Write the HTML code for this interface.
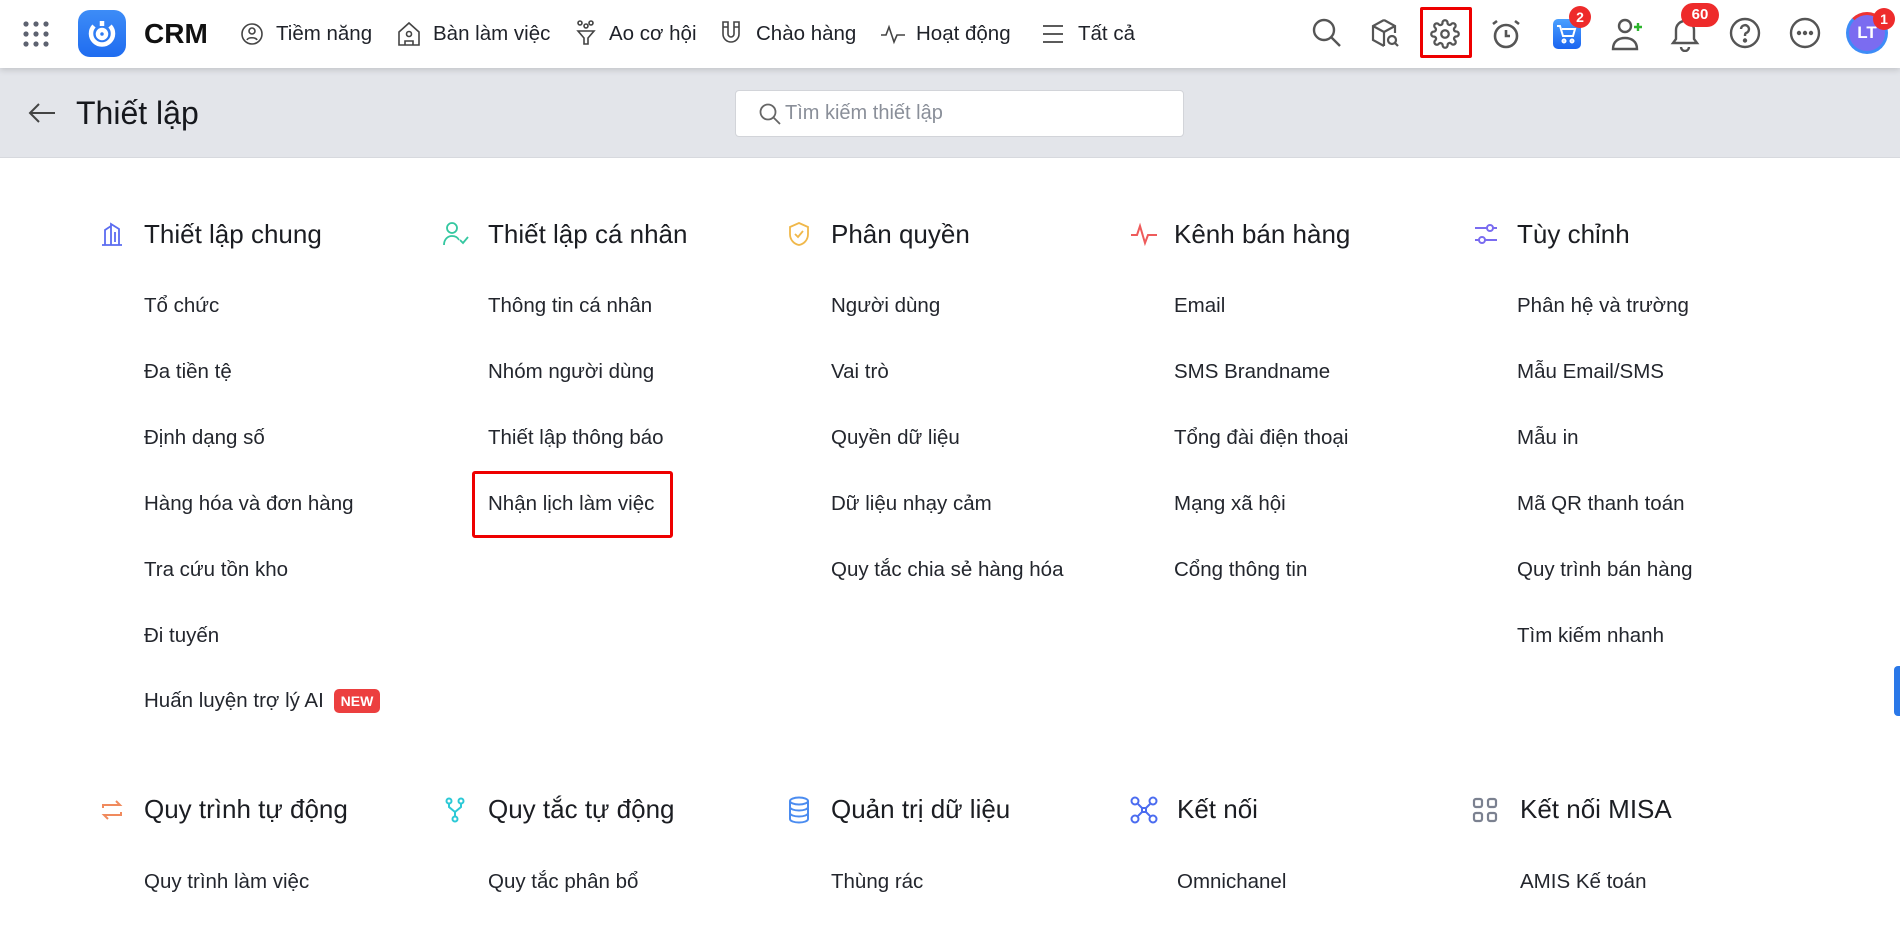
<!DOCTYPE html>
<html><head><meta charset="utf-8">
<style>
*{margin:0;padding:0;box-sizing:border-box}
body{width:1900px;height:931px;overflow:hidden;background:#fff;font-family:"Liberation Sans",Arial,sans-serif;color:#1f2229;position:relative}
.a{position:absolute}
.top{left:0;top:0;width:1900px;height:68px;background:#fff;box-shadow:0 2px 6px rgba(0,0,0,.15);z-index:2}
.nav{top:0;height:68px;line-height:68px;font-size:20.5px;color:#1f2229;white-space:nowrap}
.hdr{left:0;top:68px;width:1900px;height:90px;background:#e3e5ea;border-bottom:1px solid #d7d9de}
.sec{font-size:26px;color:#1b1d22;white-space:nowrap;line-height:32px}
.it{font-size:20.5px;color:#23262d;white-space:nowrap;line-height:28px}
svg{position:absolute}
</style></head><body>
<div class="a top">
 <svg style="left:22px;top:20px" width="28" height="28" viewBox="0 0 28 28" fill="#5d6270"><circle cx="4" cy="4" r="2.6"/><circle cx="14" cy="4" r="2.6"/><circle cx="24" cy="4" r="2.6"/><circle cx="4" cy="14" r="2.6"/><circle cx="14" cy="14" r="2.6"/><circle cx="24" cy="14" r="2.6"/><circle cx="4" cy="24" r="2.6"/><circle cx="14" cy="24" r="2.6"/><circle cx="24" cy="24" r="2.6"/></svg>
 <div class="a" style="left:78px;top:10px;width:48px;height:47px;border-radius:12px;background:linear-gradient(#3d8cf7,#1f6cf0)"></div>
 <svg style="left:87px;top:18px" width="30" height="30" viewBox="0 0 30 30" fill="none" stroke="#fff" stroke-width="4.5"><path d="M7 8a11 11 0 1 0 16 0"/><circle cx="15" cy="16" r="4"/><path d="M15 3v5"/></svg>
 <div class="a" style="left:144px;top:0;line-height:68px;font-size:28px;font-weight:bold;color:#111">CRM</div>
 <svg style="left:240px;top:22px" width="24" height="24" viewBox="0 0 24 24" fill="none" stroke="#444" stroke-width="1.6"><circle cx="12" cy="12" r="10"/><circle cx="12" cy="9" r="3"/><path d="M7 18c1-3 9-3 10 0"/></svg>
 <div class="a nav" style="left:276px">Tiềm năng</div>
 <svg style="left:397px;top:21px" width="24" height="26" viewBox="0 0 24 26" fill="none" stroke="#444" stroke-width="1.6"><path d="M2 11L12 2l10 9v13H2z"/><circle cx="12" cy="13" r="2.5"/><path d="M8 24v-4h8v4"/></svg>
 <div class="a nav" style="left:433px">Bàn làm việc</div>
 <svg style="left:575px;top:20px" width="22" height="26" viewBox="0 0 22 26" fill="none" stroke="#444" stroke-width="1.6"><circle cx="5" cy="3" r="2"/><circle cx="16" cy="3" r="2"/><circle cx="11" cy="6" r="2"/><path d="M3 11h16l-6 7v6h-4v-6z"/></svg>
 <div class="a nav" style="left:609px">Ao cơ hội</div>
 <svg style="left:720px;top:20px" width="22" height="26" viewBox="0 0 22 26" fill="none" stroke="#444" stroke-width="1.6"><path d="M3 2v12a8 8 0 0 0 16 0V2h-5v12a3 3 0 0 1-6 0V2z"/><path d="M3 7h5M14 7h5"/></svg>
 <div class="a nav" style="left:756px">Chào hàng</div>
 <svg style="left:880px;top:22px" width="26" height="24" viewBox="0 0 26 24" fill="none" stroke="#444" stroke-width="1.6"><path d="M1 13h5l3-8 5 15 3-7h8"/></svg>
 <div class="a nav" style="left:916px">Hoạt động</div>
 <svg style="left:1042px;top:24px" width="22" height="20" viewBox="0 0 22 20" stroke="#444" stroke-width="1.8"><path d="M1 2h20M1 10h20M1 18h20"/></svg>
 <div class="a nav" style="left:1078px">Tất cả</div>
 <svg style="left:1311px;top:17px" width="32" height="32" viewBox="0 0 32 32" fill="none" stroke="#555" stroke-width="2.4"><circle cx="13" cy="13" r="10"/><path d="M20.5 20.5L29 29"/></svg>
 <svg style="left:1370px;top:18px" width="32" height="32" viewBox="0 0 32 32" fill="none" stroke="#555" stroke-width="2.2"><path d="M14 2l11 6v7M14 2L3 8v14l11 6M3 8l11 6 11-6M14 14v14"/><circle cx="22" cy="22" r="4"/><path d="M25 25l3 3"/></svg>
 <div class="a" style="left:1420px;top:7px;width:52px;height:51px;border:3px solid #ee0000;border-radius:2px"></div>
 <svg style="left:1430px;top:19px" width="30" height="30" viewBox="0 0 24 24" fill="none" stroke="#555" stroke-width="1.8"><circle cx="12" cy="12" r="3"/><path d="M19.4 15a1.7 1.7 0 0 0 .3 1.8l.1.1a2 2 0 1 1-2.8 2.8l-.1-.1a1.7 1.7 0 0 0-1.8-.3 1.7 1.7 0 0 0-1 1.5V21a2 2 0 1 1-4 0v-.1a1.7 1.7 0 0 0-1.100-1.5 1.7 1.7 0 0 0-1.8.3l-.1.1a2 2 0 1 1-2.8-2.8l.1-.1a1.7 1.7 0 0 0 .3-1.8 1.7 1.7 0 0 0-1.5-1H3a2 2 0 1 1 0-4h.1a1.7 1.7 0 0 0 1.5-1.1 1.7 1.7 0 0 0-.3-1.8l-.1-.1a2 2 0 1 1 2.8-2.8l.1.1a1.7 1.7 0 0 0 1.8.3H9a1.7 1.7 0 0 0 1-1.5V3a2 2 0 1 1 4 0v.1a1.7 1.7 0 0 0 1 1.5 1.7 1.7 0 0 0 1.8-.3l.1-.1a2 2 0 1 1 2.8 2.8l-.1.1a1.7 1.7 0 0 0-.3 1.8V9a1.7 1.7 0 0 0 1.5 1H21a2 2 0 1 1 0 4h-.1a1.7 1.7 0 0 0-1.5 1z"/></svg>
 <svg style="left:1490px;top:18px" width="32" height="32" viewBox="0 0 32 32" fill="none" stroke="#555" stroke-width="2.6"><circle cx="16" cy="18" r="11"/><path d="M16 12v6h4M3 6l4-3M29 6l-4-3"/></svg>
 <div class="a" style="left:1553px;top:19px;width:28px;height:30px;border-radius:5px;background:linear-gradient(#4aa0ff,#1a64f0)"></div>
 <svg style="left:1556px;top:23px" width="22" height="22" viewBox="0 0 22 22" fill="none" stroke="#fff" stroke-width="2"><path d="M1 3h3l3 10h10l2-7H6"/><circle cx="8" cy="18" r="1.5"/><circle cx="16" cy="18" r="1.5"/></svg>
 <div class="a" style="left:1569px;top:6px;width:22px;height:22px;border-radius:50%;background:#ee2b2b;color:#fff;font-size:14px;font-weight:bold;text-align:center;line-height:22px">2</div>
 <svg style="left:1610px;top:16px" width="36" height="36" viewBox="0 0 36 36" fill="none" stroke="#555" stroke-width="2.4"><circle cx="15" cy="10" r="6"/><path d="M3 33c0-8 6-11 12-11s12 3 12 11z"/><path d="M28 7v8M24 11h8" stroke="#2cb52c"/></svg>
 <svg style="left:1670px;top:18px" width="30" height="34" viewBox="0 0 30 34" fill="none" stroke="#555" stroke-width="2.4"><path d="M15 3a9 9 0 0 0-9 9v9l-3 4h24l-3-4v-9a9 9 0 0 0-9-9zM11 29a4 4 0 0 0 8 0"/></svg>
 <div class="a" style="left:1681px;top:3px;width:38px;height:24px;border-radius:12px;background:#ee2b2b;color:#fff;font-size:15px;font-weight:bold;text-align:center;line-height:24px">60</div>
 <svg style="left:1729px;top:17px" width="32" height="32" viewBox="0 0 32 32" fill="none" stroke="#555" stroke-width="2.4"><circle cx="16" cy="16" r="14"/><path d="M12 12a4 4 0 1 1 5 4c-1 .5-1 1.5-1 3"/><circle cx="16" cy="23.5" r="1" fill="#555"/></svg>
 <svg style="left:1789px;top:17px" width="32" height="32" viewBox="0 0 32 32" fill="none" stroke="#555" stroke-width="2.4"><circle cx="16" cy="16" r="14"/><circle cx="10" cy="16" r="1" fill="#555"/><circle cx="16" cy="16" r="1" fill="#555"/><circle cx="22" cy="16" r="1" fill="#555"/></svg>
 <div class="a" style="left:1846px;top:12px;width:42px;height:42px;border-radius:50%;border:3px solid #3d8cf7;border-top-color:#e33;background:#7b6cf0;color:#fff;font-weight:bold;font-size:17px;text-align:center;line-height:36px">LT</div>
 <div class="a" style="left:1873px;top:8px;width:22px;height:22px;border-radius:50%;background:#ee2b2b;color:#fff;font-size:14px;font-weight:bold;text-align:center;line-height:22px">1</div>
</div>
<div class="a hdr">
 <svg style="left:28px;top:34px" width="28" height="22" viewBox="0 0 28 22" fill="none" stroke="#444" stroke-width="2"><path d="M27 11H2M11 2L2 11l9 9"/></svg>
 <div class="a" style="left:76px;top:26px;font-size:32px;line-height:38px;color:#16181d">Thiết lập</div>
 <div class="a" style="left:735px;top:22px;width:449px;height:47px;background:#fff;border:1px solid #d2d4d9;border-radius:4px"></div>
 <svg style="left:758px;top:34px" width="24" height="24" viewBox="0 0 24 24" fill="none" stroke="#666" stroke-width="1.8"><circle cx="10" cy="10" r="7.5"/><path d="M15.5 15.5L22 22"/></svg>
 <div class="a" style="left:785px;top:33px;font-size:20px;line-height:24px;color:#8a8f99">Tìm kiếm thiết lập</div>
</div>

<svg style="left:100px;top:222px" width="24" height="24" viewBox="0 0 24 24" fill="none" stroke="#5b6cf0" stroke-width="1.8"><path d="M2 23h20M5 23V8l6-4v19M11 23V2l8 5v16M15 10v10"/></svg>
<div class="a sec" style="left:144px;top:218px">Thiết lập chung</div>
<svg style="left:443px;top:221px" width="26" height="26" viewBox="0 0 26 26" fill="none" stroke="#34c7a0" stroke-width="1.8"><circle cx="9" cy="7" r="5"/><path d="M1 24c0-6 4-9 8-9s6 2 7 4M17 19l3 3 5-6"/></svg>
<div class="a sec" style="left:488px;top:218px">Thiết lập cá nhân</div>
<svg style="left:787px;top:221px" width="24" height="26" viewBox="0 0 24 26" fill="none" stroke="#f0b84a" stroke-width="1.8"><path d="M12 2l9 4v7c0 6-4 10-9 11-5-1-9-5-9-11V6z"/><path d="M8 13l3 3 5-6"/></svg>
<div class="a sec" style="left:831px;top:218px">Phân quyền</div>
<svg style="left:1130px;top:222px" width="28" height="24" viewBox="0 0 28 24" fill="none" stroke="#ee5b5b" stroke-width="2"><path d="M1 13h6l3-9 5 17 3-8h9"/></svg>
<div class="a sec" style="left:1174px;top:218px">Kênh bán hàng</div>
<svg style="left:1473px;top:221px" width="26" height="26" viewBox="0 0 26 26" fill="none" stroke="#7a6cf0" stroke-width="2"><path d="M2 7h12M20 7h4M2 19h4M12 19h12"/><circle cx="17" cy="7" r="3"/><circle cx="9" cy="19" r="3"/></svg>
<div class="a sec" style="left:1517px;top:218px">Tùy chỉnh</div>

<div class="a it" style="left:144px;top:292px">Tổ chức</div>
<div class="a it" style="left:144px;top:358px">Đa tiền tệ</div>
<div class="a it" style="left:144px;top:424px">Định dạng số</div>
<div class="a it" style="left:144px;top:490px">Hàng hóa và đơn hàng</div>
<div class="a it" style="left:144px;top:556px">Tra cứu tồn kho</div>
<div class="a it" style="left:144px;top:622px">Đi tuyến</div>
<div class="a it" style="left:144px;top:687px">Huấn luyện trợ lý AI</div>
<div class="a" style="left:334px;top:689px;width:46px;height:24px;border-radius:5px;background:#ec3f3f;color:#fff;font-size:14px;font-weight:bold;text-align:center;line-height:24px">NEW</div>

<div class="a it" style="left:488px;top:292px">Thông tin cá nhân</div>
<div class="a it" style="left:488px;top:358px">Nhóm người dùng</div>
<div class="a it" style="left:488px;top:424px">Thiết lập thông báo</div>
<div class="a it" style="left:488px;top:490px">Nhận lịch làm việc</div>
<div class="a" style="left:472px;top:471px;width:201px;height:67px;border:3px solid #ee0000;border-radius:3px"></div>

<div class="a it" style="left:831px;top:292px">Người dùng</div>
<div class="a it" style="left:831px;top:358px">Vai trò</div>
<div class="a it" style="left:831px;top:424px">Quyền dữ liệu</div>
<div class="a it" style="left:831px;top:490px">Dữ liệu nhạy cảm</div>
<div class="a it" style="left:831px;top:556px">Quy tắc chia sẻ hàng hóa</div>

<div class="a it" style="left:1174px;top:292px">Email</div>
<div class="a it" style="left:1174px;top:358px">SMS Brandname</div>
<div class="a it" style="left:1174px;top:424px">Tổng đài điện thoại</div>
<div class="a it" style="left:1174px;top:490px">Mạng xã hội</div>
<div class="a it" style="left:1174px;top:556px">Cổng thông tin</div>

<div class="a it" style="left:1517px;top:292px">Phân hệ và trường</div>
<div class="a it" style="left:1517px;top:358px">Mẫu Email/SMS</div>
<div class="a it" style="left:1517px;top:424px">Mẫu in</div>
<div class="a it" style="left:1517px;top:490px">Mã QR thanh toán</div>
<div class="a it" style="left:1517px;top:556px">Quy trình bán hàng</div>
<div class="a it" style="left:1517px;top:622px">Tìm kiếm nhanh</div>

<svg style="left:100px;top:797px" width="24" height="26" viewBox="0 0 24 26" fill="none" stroke="#f08a5d" stroke-width="2"><path d="M3 11V8h17l-4-4M21 15v3H4l4 4"/></svg>
<div class="a sec" style="left:144px;top:793px">Quy trình tự động</div>
<svg style="left:445px;top:797px" width="20" height="26" viewBox="0 0 20 26" fill="none" stroke="#2cc9d6" stroke-width="2"><circle cx="4" cy="4" r="2.5"/><circle cx="16" cy="4" r="2.5"/><circle cx="10" cy="22" r="2.5"/><path d="M4 7v3l6 5 6-5V7M10 15v4"/></svg>
<div class="a sec" style="left:488px;top:793px">Quy tắc tự động</div>
<svg style="left:788px;top:796px" width="22" height="28" viewBox="0 0 22 28" fill="none" stroke="#4b8cf0" stroke-width="2"><ellipse cx="11" cy="5" rx="9" ry="3.5"/><path d="M2 5v18c0 2 4 3.5 9 3.5s9-1.5 9-3.5V5M2 11c0 2 4 3.5 9 3.5s9-1.5 9-3.5M2 17c0 2 4 3.5 9 3.5s9-1.5 9-3.5"/></svg>
<div class="a sec" style="left:831px;top:793px">Quản trị dữ liệu</div>
<svg style="left:1130px;top:796px" width="28" height="28" viewBox="0 0 28 28" fill="none" stroke="#4b6cf0" stroke-width="2"><circle cx="5" cy="5" r="3.5"/><circle cx="23" cy="5" r="3.5"/><circle cx="5" cy="23" r="3.5"/><circle cx="23" cy="23" r="3.5"/><path d="M8 8l4 4h4l4-4M8 20l4-4h4l4 4M12 12v4M16 12v4"/></svg>
<div class="a sec" style="left:1177px;top:793px">Kết nối</div>
<svg style="left:1472px;top:797px" width="26" height="26" viewBox="0 0 26 26" fill="none" stroke="#7b8190" stroke-width="2.2"><rect x="2" y="2" width="8" height="8" rx="2"/><rect x="16" y="2" width="8" height="8" rx="2"/><rect x="2" y="16" width="8" height="8" rx="2"/><rect x="16" y="16" width="8" height="8" rx="2"/></svg>
<div class="a sec" style="left:1520px;top:793px">Kết nối MISA</div>

<div class="a it" style="left:144px;top:868px">Quy trình làm việc</div>
<div class="a it" style="left:488px;top:868px">Quy tắc phân bổ</div>
<div class="a it" style="left:831px;top:868px">Thùng rác</div>
<div class="a it" style="left:1177px;top:868px">Omnichanel</div>
<div class="a it" style="left:1520px;top:868px">AMIS Kế toán</div>

<div class="a" style="left:1894px;top:666px;width:8px;height:50px;border-radius:4px 0 0 4px;background:#2a78e8"></div>
</body></html>
